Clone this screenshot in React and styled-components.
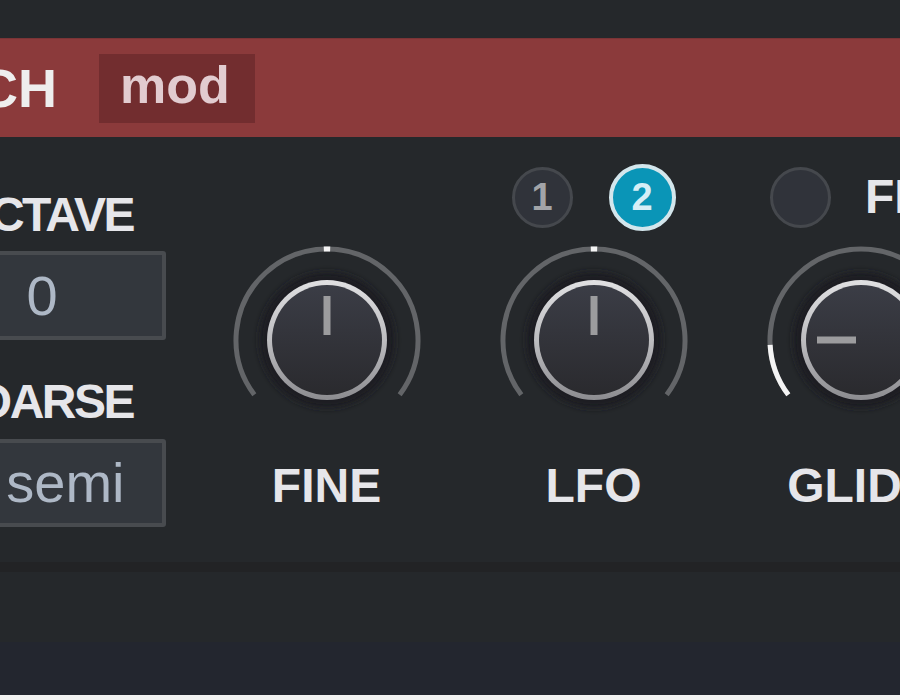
import React from 'react';
import styled, { createGlobalStyle } from 'styled-components';

const GlobalStyle = createGlobalStyle`
  body {
    margin: 0;
    background: #f2f2f2;
    overflow: hidden;
  }
`;

// Whole plugin panel
const Frame = styled.div`
  width: 900px;
  height: 695px;
  overflow: hidden;
  background: #25282b;
  font-family: 'Liberation Sans', Arial, sans-serif;
  display: flex;
  flex-direction: column;
`;

const TopBand = styled.div`
  height: 38px;
  flex-shrink: 0;
`;

// Red section header
const Header = styled.div`
  height: 99px;
  flex-shrink: 0;
  background: #8b3a3b;
  border-top: 1px solid #7a3436;
  box-sizing: border-box;
  display: flex;
  align-items: center;
  gap: 42px;
`;

const Title = styled.h2`
  margin: 0 0 0 -105px;
  font-size: 54px;
  font-weight: 700;
  color: #eeeeee;
  line-height: 98px;
  white-space: nowrap;
`;

const ModPill = styled.div`
  height: 69px;
  box-sizing: border-box;
  padding: 0 25px 7px 21px;
  background: #722d2f;
  color: #e2ccd0;
  font-size: 52px;
  font-weight: 700;
  line-height: 62px;
`;

// Main controls area
const Body = styled.div`
  height: 425px;
  flex-shrink: 0;
  display: flex;
  align-items: flex-start;
  margin-left: -82px;
`;

const SideColumn = styled.div`
  width: 248px;
  flex-shrink: 0;
  padding-top: 54px;
  display: flex;
  flex-direction: column;
  margin-right: 27px;
`;

const Label = styled.div`
  font-size: 48px;
  font-weight: 700;
  line-height: 48px;
  letter-spacing: -2.5px;
  color: #e6e6ea;
  text-align: right;
  white-space: nowrap;
  padding-right: 33px;
  margin-top: ${p => p.$top || 0}px;
`;

const ValueBox = styled.div`
  box-sizing: border-box;
  height: ${p => p.$h}px;
  margin-top: ${p => p.$top}px;
  background: #33373d;
  border: 4px solid #484b4f;
  border-radius: 3px;
  color: #aeb8c6;
  font-size: 56px;
  line-height: ${p => p.$h - 8}px;
  text-align: center;
  white-space: nowrap;
`;

const KnobColumn = styled.div`
  width: 267px;
  flex-shrink: 0;
  padding-top: 25px;
  display: flex;
  flex-direction: column;
  align-items: center;
`;

const SelectorRow = styled.div`
  align-self: stretch;
  height: 70px;
  display: flex;
  align-items: center;
  justify-content: ${p => (p.$start ? 'flex-start' : 'center')};
  padding-left: ${p => p.$pad || 0}px;
  gap: ${p => p.$gap || 0}px;
`;

const RoundButton = styled.div`
  box-sizing: border-box;
  flex-shrink: 0;
  width: ${p => (p.$active ? 67 : 61)}px;
  height: ${p => (p.$active ? 67 : 61)}px;
  border-radius: 50%;
  background: ${p => (p.$active ? '#0a95b7' : '#30333a')};
  border: ${p => (p.$active ? '4px solid #d3e6ec' : '3px solid #45484d')};
  color: ${p => (p.$active ? '#d6eef6' : '#a2a4a8')};
  font-size: 38px;
  font-weight: 700;
  display: flex;
  align-items: center;
  justify-content: center;
`;

const ToggleText = styled.div`
  font-size: 48px;
  font-weight: 700;
  line-height: 48px;
  color: #e6e6ea;
  white-space: nowrap;
  margin-left: 3px;
`;

const KnobSvg = styled.svg`
  display: block;
  flex-shrink: 0;
  margin-top: 8px;
`;

const KnobLabel = styled.div`
  margin-top: 22px;
  font-size: 48px;
  font-weight: 700;
  line-height: 48px;
  color: #e6e6ea;
  white-space: nowrap;
`;

const Divider = styled.div`
  height: 10px;
  flex-shrink: 0;
  background: #222325;
`;

const Footer = styled.div`
  height: 70px;
  flex-shrink: 0;
`;

const FooterBottom = styled.div`
  height: 53px;
  flex-shrink: 0;
  background: #23262f;
`;

const pt = (a, r) => {
  const rad = (a * Math.PI) / 180;
  return [100 + r * Math.sin(rad), 100 - r * Math.cos(rad)];
};

const arc = (a0, a1, r) => {
  const [x0, y0] = pt(a0, r);
  const [x1, y1] = pt(a1, r);
  const large = a1 - a0 > 180 ? 1 : 0;
  return `M ${x0} ${y0} A ${r} ${r} 0 ${large} 1 ${x1} ${y1}`;
};

const Knob = ({ id, angle, hiFrom, hiTo }) => (
  <KnobSvg width="200" height="200" viewBox="0 0 200 200">
    <defs>
      <linearGradient id={`ring-${id}`} x1="0" y1="0" x2="0" y2="1">
        <stop offset="0" stopColor="#e0e0e2" />
        <stop offset="0.5" stopColor="#bdbdc0" />
        <stop offset="1" stopColor="#8c8c90" />
      </linearGradient>
      <linearGradient id={`face-${id}`} x1="0" y1="0" x2="0" y2="1">
        <stop offset="0" stopColor="#3b3d46" />
        <stop offset="1" stopColor="#2a2a2e" />
      </linearGradient>
      <filter id={`blur-${id}`} x="-20%" y="-20%" width="140%" height="140%">
        <feGaussianBlur stdDeviation="3" />
      </filter>
    </defs>
    <path d={arc(-127, 127, 91)} fill="none" stroke="#636568" strokeWidth="5" />
    <path d={arc(hiFrom, hiTo, 91)} fill="none" stroke="#f4f4f4" strokeWidth="5" />
    <circle cx="100" cy="100" r="68" fill="#1b1d20" filter={`url(#blur-${id})`} />
    <circle cx="100" cy="100" r="60" fill={`url(#ring-${id})`} />
    <circle cx="100" cy="100" r="55" fill={`url(#face-${id})`} />
    <rect
      x="96.5"
      y="56"
      width="7"
      height="39"
      fill="#9c9c9e"
      transform={`rotate(${angle} 100 100)`}
    />
  </KnobSvg>
);

export default function App() {
  return (
    <>
      <GlobalStyle />
      <Frame>
        <TopBand />
        <Header>
          <Title>PITCH</Title>
          <ModPill>mod</ModPill>
        </Header>
        <Body>
          <SideColumn>
            <Label>OCTAVE</Label>
            <ValueBox $h={89} $top={12}>0</ValueBox>
            <Label $top={38}>COARSE</Label>
            <ValueBox $h={88} $top={13}>0 semi</ValueBox>
          </SideColumn>

          <KnobColumn>
            <SelectorRow />
            <Knob id="fine" angle={0} hiFrom={-2} hiTo={2} />
            <KnobLabel>FINE</KnobLabel>
          </KnobColumn>

          <KnobColumn>
            <SelectorRow $gap={36}>
              <RoundButton>1</RoundButton>
              <RoundButton $active>2</RoundButton>
            </SelectorRow>
            <Knob id="lfo" angle={0} hiFrom={-2} hiTo={2} />
            <KnobLabel>LFO</KnobLabel>
          </KnobColumn>

          <KnobColumn>
            <SelectorRow $start $pad={43} $gap={31}>
              <RoundButton />
              <ToggleText>FIXED</ToggleText>
            </SelectorRow>
            <Knob id="glide" angle={-90} hiFrom={-127} hiTo={-93} />
            <KnobLabel>GLIDE</KnobLabel>
          </KnobColumn>
        </Body>
        <Divider />
        <Footer />
        <FooterBottom />
      </Frame>
    </>
  );
}
